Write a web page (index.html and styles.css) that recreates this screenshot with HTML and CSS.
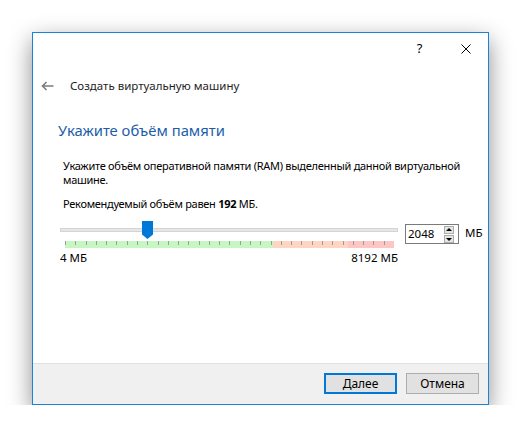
FILE: index.html
```html
<!DOCTYPE html>
<html lang="ru">
<head>
    <meta charset="UTF-8">
    <title>Создать виртуальную машину</title>
    <link rel="stylesheet" href="styles.css">
</head>
<body>

    <div class="window">
        <div class="titlebar">
            <button class="tb-btn help">?</button>
            <button class="tb-btn close">
                <svg width="10" height="10" viewBox="0 0 10 10"><path d="M0.5 0.5L9.5 9.5M9.5 0.5L0.5 9.5" stroke="#000" stroke-width="1" fill="none"/></svg>
            </button>
        </div>

        <div class="header">
            <svg class="back" width="13" height="10" viewBox="0 0 13 10"><path d="M12.5 5H1.5M5.5 1L1.5 5L5.5 9" stroke="#7c7c7c" stroke-width="1.6" fill="none"/></svg>
            <span>Создать виртуальную машину</span>
        </div>

        <div class="content">
            <h2>Укажите объём памяти</h2>
            <p class="desc">Укажите объём оперативной памяти (RAM) выделенный данной виртуальной<br>машине.</p>
            <p class="desc rec">Рекомендуемый объём равен <b>192</b> МБ.</p>

            <div class="memory-row">
                <div class="slider">
                    <div class="rail">
                        <div class="track"></div>
                        <svg class="thumb" style="left: 82px" width="11" height="18" viewBox="0 0 11 18"><path d="M0 0H11V13.5L5.5 18L0 13.5Z" fill="#0078d7"/></svg>
                    </div>
                    <div class="ticks"></div>
                    <div class="scale-labels">
                        <span>4 МБ</span>
                        <span>8192 МБ</span>
                    </div>
                </div>

                <div class="spinbox">
                    <span class="value">2048</span>
                    <div class="spin">
                        <div class="spin-btn up"></div>
                        <div class="spin-btn down"></div>
                    </div>
                </div>
                <span class="unit">МБ</span>
            </div>
        </div>

        <div class="footer">
            <button class="btn default"><u>Д</u>алее</button>
            <button class="btn">Отмена</button>
        </div>
    </div>

</body>
</html>
```

FILE: styles.css
```css
body {
    margin: 0;
    background: #ffffff;
    font-family: "Noto Sans", Arial, sans-serif;
    font-size: 11.5px;
    color: #000;
}
.window {
    margin: 32px 0 0 32px;
    width: 455px;
    height: 371px;
    border: 1px solid #1883d7;
    background: #fff;
    display: flex;
    flex-direction: column;
    box-shadow: 0 8px 22px rgba(0, 0, 0, 0.45);
}
.titlebar {
    height: 30px;
    display: flex;
    justify-content: flex-end;
}
.tb-btn {
    width: 46px;
    height: 30px;
    border: none;
    background: none;
    padding: 0;
    display: flex;
    align-items: center;
    justify-content: center;
    font-family: "Noto Sans", Arial, sans-serif;
    font-size: 13px;
    color: #000;
}
.tb-btn.help {
    padding-right: 1px;
}
.tb-btn.close {
    width: 45px;
    padding-top: 1px;
}
.header {
    height: 46px;
    display: flex;
    align-items: center;
    padding-left: 8px;
    color: #1e1e1e;
    line-height: 16px;
}
.header .back {
    margin-right: 16px;
}
.content {
    flex: 1;
    padding-left: 25px;
}
h2 {
    margin: 11px 0 0 0;
    font-size: 14.8px;
    line-height: 20px;
    font-weight: normal;
    color: #1b5eab;
}
.desc {
    margin: 19px 0 0 5px;
    font-size: 11px;
    letter-spacing: -0.28px;
    line-height: 14px;
    white-space: nowrap;
}
.desc.rec {
    margin-top: 10px;
}
.memory-row {
    display: flex;
    align-items: flex-start;
    margin-top: 10px;
    padding-left: 2px;
}
.slider {
    width: 338px;
}
.rail {
    position: relative;
    height: 18px;
}
.track {
    position: absolute;
    left: 0;
    right: 0;
    top: 7px;
    height: 2px;
    background: #e7e7e7;
    border: 1px solid #d4d4d4;
}
.thumb {
    position: absolute;
    top: 0;
}
.ticks {
    margin: 2px 0 0 5px;
    width: 329px;
    height: 7px;
    background:
        repeating-linear-gradient(to right, #9c9c9c 0, #9c9c9c 1px, transparent 1px, transparent 10.28px) 0 0 / 100% 4px no-repeat,
        linear-gradient(to right, #c6f7c3 0, #c6f7c3 208px, #fdd5c2 208px, #fdd5c2 283px, #fec5c5 283px);
}
.scale-labels {
    display: flex;
    justify-content: space-between;
    margin-top: 2px;
    line-height: 16px;
}
.spinbox {
    margin: 3px 0 0 7px;
    width: 52px;
    height: 18px;
    border: 1px solid #7a7a7a;
    display: flex;
    align-items: center;
    justify-content: space-between;
}
.spinbox .value {
    padding-left: 2px;
    line-height: 16px;
}
.spin {
    margin-right: 4px;
    display: flex;
    flex-direction: column;
    gap: 1px;
}
.spin-btn {
    width: 8px;
    height: 6px;
    border: 1px solid #adadad;
    background: #e5e5e5;
    position: relative;
}
.spin-btn::after {
    content: "";
    position: absolute;
    left: 1px;
    border-left: 3px solid transparent;
    border-right: 3px solid transparent;
}
.spin-btn.up::after {
    top: 1px;
    border-bottom: 3px solid #000;
}
.spin-btn.down::after {
    top: 2px;
    border-top: 3px solid #000;
}
.unit {
    margin: 4px 0 0 6px;
    line-height: 16px;
}
.footer {
    border-top: 1px solid #dfdfdf;
    background: #f0f0f0;
    display: flex;
    justify-content: flex-end;
    align-items: flex-start;
    padding: 9px 9px 0 0;
    box-sizing: border-box;
    height: 41px;
    gap: 9px;
}
.btn {
    width: 73px;
    height: 21px;
    padding: 0;
    border: 1px solid #adadad;
    background: #e1e1e1;
    font-family: "Noto Sans", Arial, sans-serif;
    font-size: 12px;
    color: #000;
}
.btn.default {
    border: 2px solid #0078d7;
}
```
